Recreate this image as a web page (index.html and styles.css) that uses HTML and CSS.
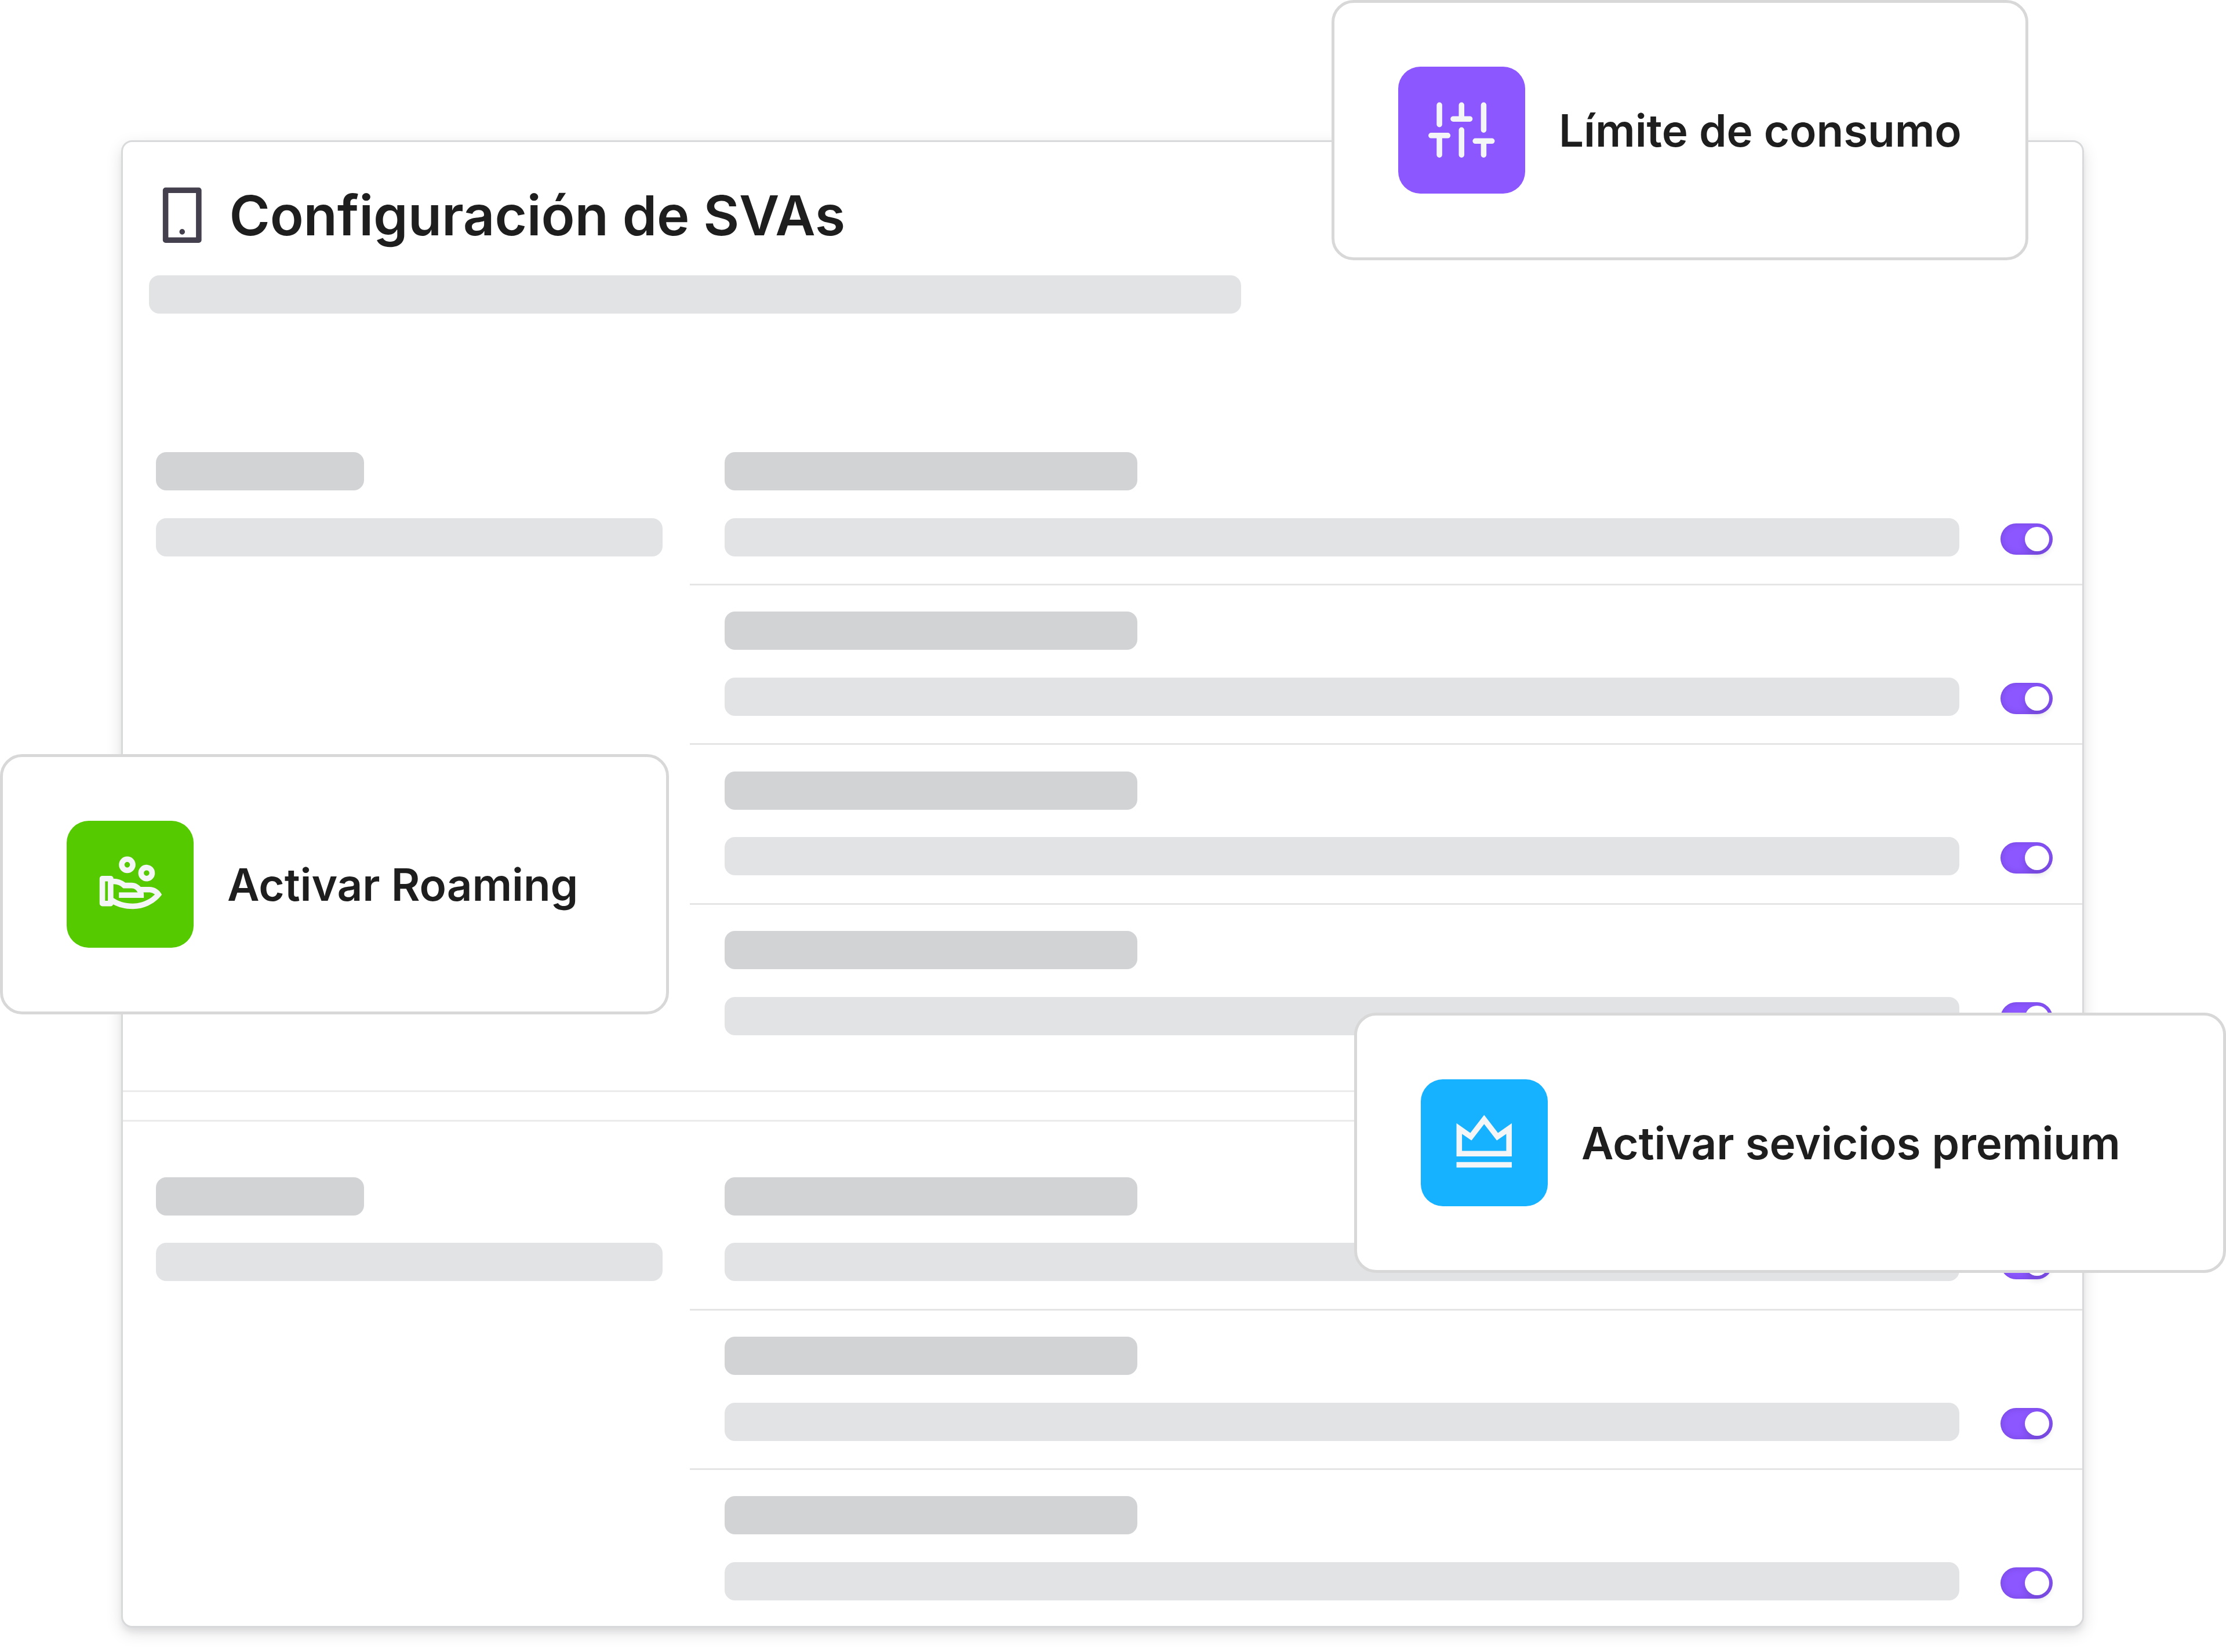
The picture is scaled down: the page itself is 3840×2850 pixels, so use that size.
FILE: index.html
```html
<!DOCTYPE html>
<html lang="es">
<head>
    <meta charset="UTF-8">
    <meta name="viewport" content="width=device-width, initial-scale=1.0">
    <title>Configuración de SVAs</title>
    <link rel="stylesheet" href="styles.css">
</head>
<body>
    <div class="stage">
        <main class="panel">
            <header class="panel-header">
                <div class="panel-title">
                    <svg class="icon" viewBox="0 0 24 24" fill="currentColor" aria-hidden="true">
                        <path d="M7 4v16h10V4H7zM6 2h12a1 1 0 0 1 1 1v18a1 1 0 0 1-1 1H6a1 1 0 0 1-1-1V3a1 1 0 0 1 1-1zm6 15a1 1 0 1 1 0 2 1 1 0 0 1 0-2z"/>
                    </svg>
                    <h1>Configuración de SVAs</h1>
                </div>
                <div class="bar bar-subtitle"></div>
            </header>

            <section class="group">
                <div class="group-info">
                    <div class="bar bar-dark"></div>
                    <div class="bar"></div>
                </div>
                <ul class="options">
                    <li class="option">
                        <div class="option-text">
                            <div class="bar bar-dark"></div>
                            <div class="bar"></div>
                        </div>
                        <span class="toggle"></span>
                    </li>
                    <li class="option">
                        <div class="option-text">
                            <div class="bar bar-dark"></div>
                            <div class="bar"></div>
                        </div>
                        <span class="toggle"></span>
                    </li>
                    <li class="option">
                        <div class="option-text">
                            <div class="bar bar-dark"></div>
                            <div class="bar"></div>
                        </div>
                        <span class="toggle"></span>
                    </li>
                    <li class="option">
                        <div class="option-text">
                            <div class="bar bar-dark"></div>
                            <div class="bar"></div>
                        </div>
                        <span class="toggle"></span>
                    </li>
                </ul>
            </section>

            <section class="group group-next">
                <div class="group-info">
                    <div class="bar bar-dark"></div>
                    <div class="bar"></div>
                </div>
                <ul class="options">
                    <li class="option">
                        <div class="option-text">
                            <div class="bar bar-dark"></div>
                            <div class="bar"></div>
                        </div>
                        <span class="toggle"></span>
                    </li>
                    <li class="option">
                        <div class="option-text">
                            <div class="bar bar-dark"></div>
                            <div class="bar"></div>
                        </div>
                        <span class="toggle"></span>
                    </li>
                    <li class="option">
                        <div class="option-text">
                            <div class="bar bar-dark"></div>
                            <div class="bar"></div>
                        </div>
                        <span class="toggle"></span>
                    </li>
                </ul>
            </section>
        </main>

        <!-- Floating cards -->
        <div class="card card-limit">
            <div class="tile tile-purple">
                <svg class="icon" viewBox="0 0 24 24" fill="none" stroke="currentColor" stroke-width="2" stroke-linecap="round" aria-hidden="true">
                    <path d="M4 21v-7M4 10V3M12 21v-9M12 8V3M20 21v-5M20 12V3M1 14h6M9 8h6M17 16h6"/>
                </svg>
            </div>
            <span class="card-label">Límite de consumo</span>
        </div>

        <div class="card card-roaming">
            <div class="tile tile-green">
                <svg class="icon" viewBox="0 0 24 24" fill="currentColor" aria-hidden="true">
                    <path d="M5 9a1 1 0 0 1 1 1 6.97 6.97 0 0 1 4.33 1.5h2.17c1.333 0 2.53.58 3.354 1.5H19a5 5 0 0 1 4.516 2.851C21.151 18.972 17.322 21 13 21c-2.79 0-5.15-.603-7.06-1.658A.998.998 0 0 1 5 20H2a1 1 0 0 1-1-1v-9a1 1 0 0 1 1-1h3zm1.001 3L6 17.022l.045.032C7.84 18.314 10.178 19 13 19c3.004 0 5.799-1.156 7.835-3.13l.133-.133-.12-.1a2.994 2.994 0 0 0-1.643-.63L19 15l-2.111-.001c.072.322.111.656.111 1v1H8v-2h6.79l-.034-.078a2.501 2.501 0 0 0-2.092-1.416L12.5 13.5H9.57A4.985 4.985 0 0 0 6.002 12zM4 11H3v7h1v-7zm14-6a3 3 0 1 1 0 6 3 3 0 0 1 0-6zm0 2a1 1 0 1 0 0 2 1 1 0 0 0 0-2zm-7-5a3 3 0 1 1 0 6 3 3 0 0 1 0-6zm0 2a1 1 0 1 0 0 2 1 1 0 0 0 0-2z"/>
                </svg>
            </div>
            <span class="card-label">Activar Roaming</span>
        </div>

        <div class="card card-premium">
            <div class="tile tile-blue">
                <svg class="icon" viewBox="0 0 24 24" fill="currentColor" aria-hidden="true">
                    <path d="M2 19h20v2H2v-2zM2 5l5 3.5L12 2l5 6.5L22 5v12H2V5zm2 3.841V15h16V8.841l-3.42 2.394L12 5.28l-4.58 5.955L4 8.84z"/>
                </svg>
            </div>
            <span class="card-label">Activar sevicios premium</span>
        </div>
    </div>
</body>
</html>
```
FILE: styles.css
```css
* {
    box-sizing: border-box;
}

body {
    font-family: Inter, "Liberation Sans", sans-serif;
    background-color: #ffffff;
    color: #1e1e1e;
    margin: 0;
}

.stage {
    position: relative;
    width: 3840px;
    height: 2850px;
    padding: 242px 245px 42px 209px;
    overflow: hidden;
}

.panel {
    height: 100%;
    background-color: #ffffff;
    border: 3px solid #d8d9da;
    border-radius: 19px;
    box-shadow: 0 9px 28px rgba(20, 20, 35, 0.12), 0 9px 12px -3px rgba(20, 20, 35, 0.08);
}

.panel-header {
    padding: 69px 45px 194px;
}

.panel-title {
    display: flex;
    align-items: center;
    gap: 24px;
    margin-bottom: 46.5px;
}

.panel-title .icon {
    color: #45404d;
}

h1 {
    margin: 0;
    padding-top: 1px;
    font-size: 95.5px;
    font-weight: 600;
    line-height: 113px;
    letter-spacing: -0.2px;
}

.icon {
    display: block;
    flex: none;
    width: 114.5px;
    height: 114.5px;
}

/* Placeholder bars */
.bar {
    height: 66px;
    border-radius: 18px;
    background-color: #e2e3e5;
}

.bar-dark {
    background-color: #d2d3d5;
}

.bar-subtitle {
    width: 1884px;
}

.group {
    display: grid;
    grid-template-columns: 978px 1fr;
    height: 1149px;
    border-bottom: 3px solid #ebebeb;
}

.group-next {
    height: auto;
    margin-top: 48px;
    padding-top: 50.5px;
    border-top: 3px solid #ebebeb;
    border-bottom: none;
}

.group-info,
.option-text {
    display: flex;
    flex-direction: column;
    gap: 47.8px;
}

.group-info {
    padding: 45.2px 47.5px 0 57px;
}

.group-info .bar-dark {
    width: 359px;
}

.options {
    list-style-type: none;
    margin: 0;
    padding: 0;
}

.option {
    display: flex;
    align-items: flex-end;
    justify-content: space-between;
    padding: 45.2px 51px 47.2px 60px;
    border-bottom: 3px solid #e5e5e5;
}

.option:last-child {
    border-bottom: none;
}

.group-next .option:last-child {
    padding-bottom: 0;
}

.option-text {
    width: 2129.5px;
}

.option-text .bar-dark {
    width: 712px;
}

.toggle {
    display: flex;
    justify-content: flex-end;
    width: 90px;
    height: 54px;
    margin-bottom: 3px;
    padding: 6px;
    border-radius: 27px;
    background-color: #8c57ff;
    box-shadow: inset 0 0 12px rgba(40, 20, 90, 0.22);
}

.toggle::after {
    content: "";
    width: 42px;
    height: 42px;
    border-radius: 50%;
    background-color: #ffffff;
    box-shadow: 0 6px 12px rgba(30, 20, 80, 0.2);
}

/* Cards lie over the panel */
.card {
    position: absolute;
    display: flex;
    align-items: center;
    gap: 58px;
    height: 448.5px;
    padding-left: 109.5px;
    background-color: #ffffff;
    border: 5px solid #d8d8d8;
    border-radius: 38px;
}

.card-limit {
    top: 0;
    left: 2297px;
    width: 1202px;
}

.card-roaming {
    top: 1301px;
    left: 0;
    width: 1154px;
}

.card-premium {
    top: 1747px;
    left: 2336px;
    width: 1504px;
}

.card-label {
    padding-top: 2px;
    font-size: 76.4px;
    font-weight: 600;
    letter-spacing: -0.1px;
    white-space: nowrap;
}

.tile {
    display: flex;
    align-items: center;
    justify-content: center;
    flex: none;
    width: 219.5px;
    height: 219.5px;
    border-radius: 38px;
    color: #f4f5f7;
}

.tile-purple {
    background-color: #8c57ff;
}

.tile-green {
    background-color: #56ca00;
}

.tile-blue {
    background-color: #16b1ff;
}
```
